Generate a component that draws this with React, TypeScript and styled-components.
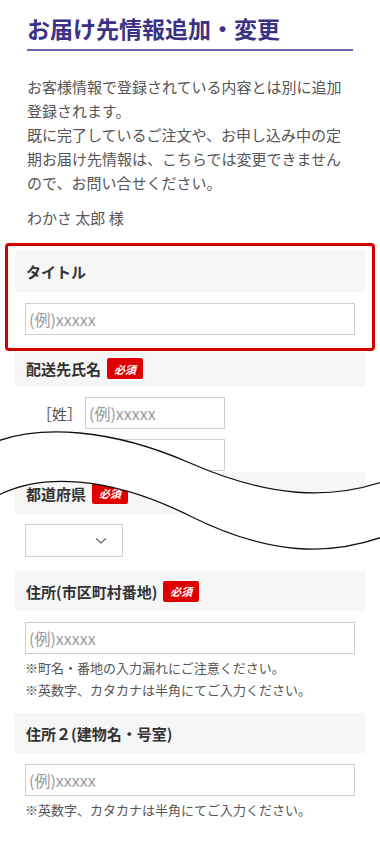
import React from 'react';
import styled, { createGlobalStyle } from 'styled-components';

const GlobalStyle = createGlobalStyle`
  body {
    margin: 0;
    background: #fff;
    font-family: "Noto Sans CJK JP", "Noto Sans", sans-serif;
  }
  * { box-sizing: border-box; }
`;

const Page = styled.div`
  position: relative;
  width: 380px;
  min-height: 844px;
  overflow: hidden;
  padding-bottom: 24px;
`;

const Intro = styled.div`
  padding: 0 27px;
`;

const Title = styled.h1`
  margin: 0;
  padding: 13px 0 6px;
  font-size: 23px;
  line-height: 30px;
  font-weight: 700;
  color: #3b3286;
  border-bottom: 2px solid #6c64ad;
`;

const Lead = styled.p`
  margin: ${(p: { $top: number }) => p.$top}px 0 0;
  font-size: 15px;
  line-height: 24px;
  color: #555;
`;

const Form = styled.div`
  padding: 0 15px;
  display: flex;
  flex-direction: column;
`;

const Highlight = styled.div`
  margin: 13px -10px 0;
  border: 3px solid #d40000;
  border-radius: 4px;
  padding: 4px 7px 13px;
`;

const Band = styled.div<{ $h: number }>`
  height: ${(p) => p.$h}px;
  background: #f6f6f6;
  padding: 0 11px;
  display: flex;
  align-items: center;
  gap: 6px;
  font-size: 15px;
  font-weight: 700;
  color: #333;
`;

const Badge = styled.span`
  display: inline-flex;
  align-items: center;
  height: 21px;
  padding: 0 7px;
  background: #e00000;
  border-radius: 2px;
  color: #fff;
  font-size: 11px;
  font-weight: 700;
  font-style: italic;
`;

const Body = styled.div<{ $top: number; $bottom: number }>`
  padding: ${(p) => p.$top}px 10px ${(p) => p.$bottom}px;
  display: flex;
  flex-direction: column;
`;

const TextInput = styled.input<{ $w: number }>`
  width: ${(p) => p.$w}px;
  height: 32px;
  border: 1px solid #cfcfcf;
  border-radius: 0;
  padding: 0 3px;
  font-family: inherit;
  font-size: 16px;
  color: #333;
  background: #fff;
  outline: none;
  &::placeholder {
    color: #9a9a9a;
  }
`;

const NameRow = styled.div<{ $top: number }>`
  display: flex;
  align-items: center;
  margin-top: ${(p) => p.$top}px;
`;

const NameLabel = styled.span`
  width: 60px;
  padding-left: 12px;
  font-size: 15px;
  color: #555;
`;

const SelectBox = styled.div`
  width: 98px;
  height: 33px;
  border: 1px solid #cfcfcf;
  display: flex;
  align-items: center;
  justify-content: flex-end;
  padding-right: 15px;
`;

const Note = styled.p`
  margin: 3px 0 0;
  font-size: 13px;
  line-height: 22px;
  color: #555;
`;

const Wave = styled.svg`
  position: absolute;
  top: 0;
  left: 0;
  pointer-events: none;
`;

const topCurve = 'M-5 442 C40 425 110 428 190 463 S330 500 385 481';
const bottomCurve = 'M-5 497 C40 472 110 476 190 516 S330 556 385 536';
const gap =
  'M-5 442 C40 425 110 428 190 463 C270 498 330 500 385 481 L385 536 C330 556 270 556 190 516 C110 476 40 472 -5 497 Z';

const Chevron = () => (
  <svg width="12" height="8" viewBox="0 0 12 8">
    <polyline points="1,1.5 6,6 11,1.5" fill="none" stroke="#666" strokeWidth="1.3" />
  </svg>
);

export default function App() {
  return (
    <Page>
      <GlobalStyle />
      <Intro>
        <Title>お届け先情報追加・変更</Title>
        <Lead $top={24}>
          お客様情報で登録されている内容とは別に追加登録されます。
          <br />
          既に完了しているご注文や、お申し込み中の定期お届け先情報は、こちらでは変更できませんので、お問い合せください。
        </Lead>
        <Lead $top={11}>わかさ 太郎 様</Lead>
      </Intro>

      <Form>
        <Highlight>
          <Band $h={42}>タイトル</Band>
          <Body $top={11} $bottom={0}>
            <TextInput $w={330} placeholder="(例)xxxxx" />
          </Body>
        </Highlight>

        <Band $h={35}>
          配送先氏名<Badge>必須</Badge>
        </Band>
        <Body $top={0} $bottom={1}>
          <NameRow $top={11}>
            <NameLabel>［姓］</NameLabel>
            <TextInput $w={140} placeholder="(例)xxxxx" />
          </NameRow>
          <NameRow $top={10}>
            <NameLabel>［名］</NameLabel>
            <TextInput $w={140} placeholder="(例)xxxxx" />
          </NameRow>
        </Body>

        <Band $h={42}>
          都道府県<Badge>必須</Badge>
        </Band>
        <Body $top={10} $bottom={14}>
          <SelectBox>
            <Chevron />
          </SelectBox>
        </Body>

        <Band $h={40}>
          住所(市区町村番地)<Badge>必須</Badge>
        </Band>
        <Body $top={11} $bottom={12}>
          <TextInput $w={330} placeholder="(例)xxxxx" />
          <Note>
            ※町名・番地の入力漏れにご注意ください。
            <br />
            ※英数字、カタカナは半角にてご入力ください。
          </Note>
        </Body>

        <Band $h={40}>住所２(建物名・号室)</Band>
        <Body $top={11} $bottom={12}>
          <TextInput $w={330} placeholder="(例)xxxxx" />
          <Note>※英数字、カタカナは半角にてご入力ください。</Note>
        </Body>
      </Form>

      <Wave width="380" height="844" viewBox="0 0 380 844">
        <path d={gap} fill="#fff" />
        <path d={topCurve} fill="none" stroke="#111" strokeWidth="1.3" />
        <path d={bottomCurve} fill="none" stroke="#111" strokeWidth="1.3" />
      </Wave>
    </Page>
  );
}
